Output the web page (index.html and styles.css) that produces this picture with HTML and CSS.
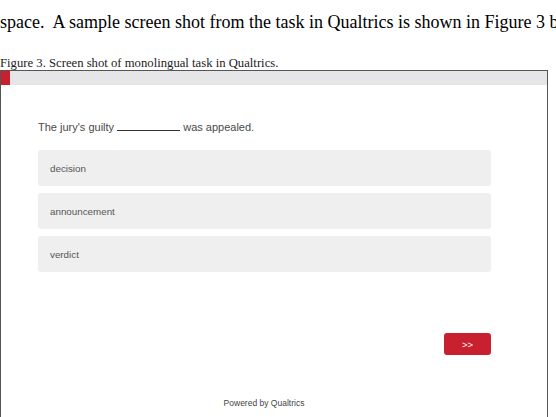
FILE: index.html
```html
<!DOCTYPE html>
<html lang="en">
<head>
    <meta charset="UTF-8">
    <meta name="viewport" content="width=device-width, initial-scale=1.0">
    <title>Figure 3 - Qualtrics task</title>
    <link rel="stylesheet" href="styles.css">
</head>
<body>
    <p class="lead">space.&nbsp; A sample screen shot from the task in Qualtrics is shown in Figure 3 below.</p>
    <p class="caption">Figure 3. Screen shot of monolingual task in Qualtrics.</p>

    <div class="frame">
        <div class="progress">
            <div class="progress-fill"></div>
        </div>

        <div class="survey">
            <p class="question">The jury's guilty <span class="blank"></span> was appealed.</p>

            <ul class="choices">
                <li class="choice">decision</li>
                <li class="choice">announcement</li>
                <li class="choice">verdict</li>
            </ul>

            <div class="nav">
                <button class="next-btn">&gt;&gt;</button>
            </div>
        </div>

        <footer class="powered">Powered by Qualtrics</footer>
    </div>
</body>
</html>
```

FILE: styles.css
```css
* {
    margin: 0;
    padding: 0;
    box-sizing: border-box;
}

body {
    background: #ffffff;
    color: #000000;
    overflow: hidden;
    height: 417px;
}

.lead {
    font-family: "Liberation Serif", "Times New Roman", serif;
    font-size: 18px;
    line-height: 21px;
    padding-top: 12px;
    white-space: nowrap;
}

.caption {
    font-family: "Liberation Serif", "Times New Roman", serif;
    font-size: 12.7px;
    line-height: 14px;
    margin-top: 23px;
    color: #222;
}

.frame {
    width: 548px;
    height: 360px;
    border: 1px solid #555;
    border-bottom: none;
    font-family: "Liberation Sans", Arial, sans-serif;
}

.progress {
    height: 14px;
    background: #e6e6e8;
}

.progress-fill {
    width: 9px;
    height: 100%;
    background: #c8202f;
}

.survey {
    padding: 35px 56px 0 37px;
}

.question {
    font-size: 11px;
    line-height: 14px;
    color: #4a4a4a;
}

.blank {
    display: inline-block;
    width: 63px;
    border-bottom: 1px solid #333;
    vertical-align: baseline;
}

.choices {
    list-style: none;
    margin-top: 16px;
    display: flex;
    flex-direction: column;
    gap: 7px;
}

.choice {
    height: 36px;
    background: #efefef;
    border-radius: 3px;
    padding: 0 12px;
    display: flex;
    align-items: center;
    font-size: 9.8px;
    color: #555;
}

.nav {
    display: flex;
    justify-content: flex-end;
    margin-top: 61px;
}

.next-btn {
    width: 47px;
    height: 22px;
    border: none;
    border-radius: 3px;
    background: #c8202f;
    color: #fff;
    font-family: "Liberation Sans", Arial, sans-serif;
    font-size: 9.5px;
}

.powered {
    margin-top: 43px;
    padding-right: 20px;
    text-align: center;
    font-size: 8.5px;
    color: #444;
}
```
